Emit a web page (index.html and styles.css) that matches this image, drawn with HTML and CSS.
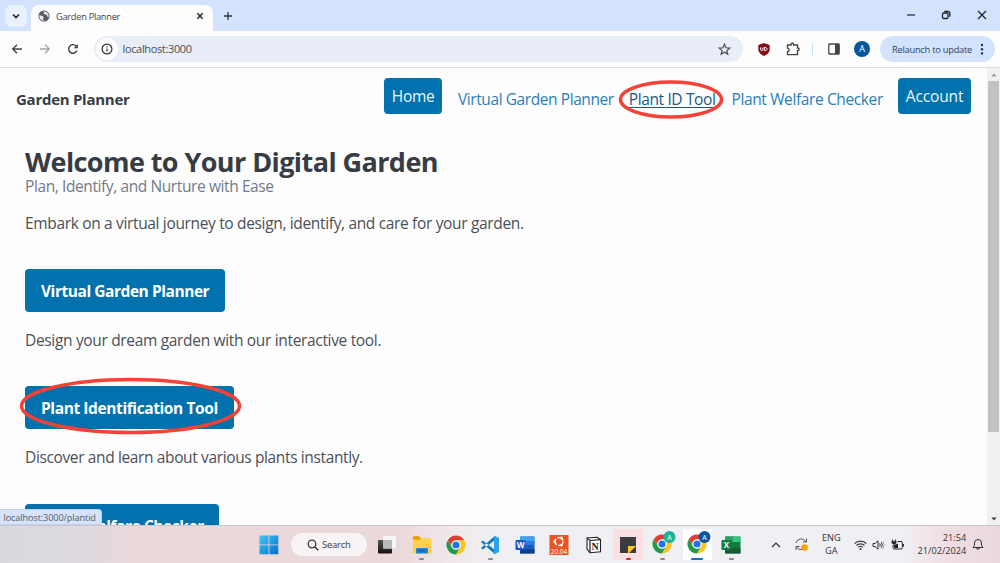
FILE: index.html
```html
<!DOCTYPE html>
<html lang="en">
<head>
<meta charset="utf-8">
<title>Garden Planner</title>
<link rel="stylesheet" href="styles.css">
</head>
<body>
<div class="screen">
  <header class="tabstrip">
    <button class="tab-search"><svg width="22" height="22" viewBox="0 0 22 22"><path d="M8 9.5l3 3 3-3" fill="none" stroke="#222" stroke-width="1.6"/></svg></button>
    <div class="tab">
      <svg width="12" height="12" viewBox="0 0 12 12"><circle cx="6" cy="6" r="5.6" fill="#5a5e63"/><path d="M1.3 5.2L4 5.7 5.8 7.2 5 8.2 5.5 10.6C3 10.3 1 8.200 1.300 5.200zM6 1.500L5.500 3.200 7 4.500 8.500 4.300 9.500 6.800 10.600 7C11 4 9.500 1.800 6 1.500z" fill="#e8edf5"/></svg>
      <span class="tab-title">Garden Planner</span>
      <svg class="tab-close" width="8" height="8" viewBox="0 0 8 8"><path d="M1.300 1.300l5.400 5.400M6.700 1.300l-5.400 5.400" stroke="#222" stroke-width="1.400"/></svg>
    </div>
    <svg class="tab-new" width="10" height="10" viewBox="0 0 10 10"><path d="M5 1v8M1 5h8" stroke="#333" stroke-width="1.300"/></svg>
    <div class="window-controls">
      <svg width="10" height="10" viewBox="0 0 10 10"><path d="M1 5h8" stroke="#222" stroke-width="1.200"/></svg>
      <svg width="10" height="10" viewBox="0 0 10 10"><rect x="1.500" y="3" width="5.500" height="5.500" rx="1.300" fill="none" stroke="#222" stroke-width="1.300"/><path d="M3.300 1.500h3.500a2 2 0 0 1 2 2v3.300" fill="none" stroke="#222" stroke-width="1.300"/></svg>
      <svg width="10" height="10" viewBox="0 0 10 10"><path d="M1 1l8 8M9 1l-8 8" stroke="#222" stroke-width="1.200"/></svg>
    </div>
  </header>

  <div class="toolbar">
    <div class="nav-buttons">
      <svg width="12" height="12" viewBox="0 0 12 12"><path d="M11 6H2M6 1.700L1.700 6 6 10.300" fill="none" stroke="#444" stroke-width="1.400"/></svg>
      <svg width="12" height="12" viewBox="0 0 12 12"><path d="M1 6h9M6 1.700L10.300 6 6 10.300" fill="none" stroke="#a3a5a8" stroke-width="1.300"/></svg>
      <svg width="12" height="12" viewBox="0 0 12 12"><path d="M10 7.500A4.300 4.300 0 1 1 9.600 3.600" fill="none" stroke="#444" stroke-width="1.400"/><path d="M10.900 1v4.200H6.700z" fill="#444"/></svg>
    </div>
    <div class="omnibox">
      <span class="site-info"><svg width="12" height="12" viewBox="0 0 12 12"><circle cx="6" cy="6" r="4.900" fill="none" stroke="#333" stroke-width="1.200"/><path d="M6 5.400v3.100M6 3.300v1.200" stroke="#333" stroke-width="1.200"/></svg></span>
      <span class="url">localhost:3000</span>
      <svg class="star" width="13" height="13" viewBox="0 0 13 13"><path d="M6.500 1.300l1.500 3.500 3.800.300-2.900 2.500.900 3.700-3.300-2-3.300 2 .9-3.700L1.200 5.100 5 4.800z" fill="none" stroke="#484b50" stroke-width="1.200"/></svg>
    </div>
    <div class="extensions">
      <svg width="12" height="13" viewBox="0 0 12 13"><path d="M6 0l5.700 2v4.500C11.700 9.500 9 11.700 6 13 3 11.700.3 9.500.3 6.500V2z" fill="#850f16"/><path d="M2.600 4.500v2c0 1.500 2.200 1.500 2.200 0v-2M6.300 4.500v3h.8c2.500 0 2.500-3 0-3z" fill="none" stroke="#fff" stroke-width="1"/></svg>
      <svg class="puzzle" width="14" height="14" viewBox="0 0 14 14"><path d="M1.500 3H5V2.500a1.300 1.300 0 0 1 2.600 0V3H11.500v3h.3a1.300 1.300 0 0 1 0 2.600h-.3v4H1.500V9.500c2.200-.2 2.200-3.200 0-3.400z" fill="none" stroke="#444" stroke-width="1.400"/></svg>
      <span class="divider"></span>
      <svg class="panel" width="12" height="12" viewBox="0 0 12 12"><rect x=".8" y="1" width="10.400" height="10" rx=".8" fill="none" stroke="#444" stroke-width="1.300"/><path d="M7 1h4v10H7z" fill="#444"/></svg>
      <span class="avatar">A</span>
      <button class="relaunch"><span>Relaunch to update</span><svg width="4" height="14" viewBox="0 0 4 14"><g fill="#17324d"><circle cx="2" cy="3" r="1.200"/><circle cx="2" cy="7.200" r="1.200"/><circle cx="2" cy="11.400" r="1.200"/></g></svg></button>
    </div>
  </div>

  <div class="viewport">
    <div class="page">
      <nav class="site-nav">
        <strong class="brand">Garden Planner</strong>
        <a class="nav-btn home">Home</a>
        <a class="nav-link planner">Virtual Garden Planner</a>
        <a class="nav-link idtool">Plant ID Tool<svg class="ring ring-nav" width="106" height="41" viewBox="0 0 106 41"><ellipse cx="53" cy="20.500" rx="50.500" ry="17.500"/></svg></a>
        <a class="nav-link welfare">Plant Welfare Checker</a>
        <a class="nav-btn account">Account</a>
      </nav>
      <main class="content">
        <h1>Welcome to Your Digital Garden</h1>
        <p class="subtitle">Plan, Identify, and Nurture with Ease</p>
        <p class="intro">Embark on a virtual journey to design, identify, and care for your garden.</p>
        <section class="feature"><a class="cta cta-planner">Virtual Garden Planner</a><p class="desc-planner">Design your dream garden with our interactive tool.</p></section>
        <section class="feature"><a class="cta cta-id">Plant Identification Tool<svg class="ring ring-cta" width="224" height="60" viewBox="0 0 224 60"><ellipse cx="112.500" cy="30" rx="109" ry="26.500"/></svg></a><p class="desc-id">Discover and learn about various plants instantly.</p></section>
        <section class="feature"><a class="cta cta-welfare">Plant Welfare Checker</a></section>
      </main>
      <div class="status">localhost:3000/plantid</div>
    </div>
    <div class="scrollbar">
      <svg width="12" height="12" viewBox="0 0 12 12"><path d="M3.300 8.500L6 5.500l2.700 3z" fill="#999"/></svg>
      <span class="thumb"></span>
      <svg width="12" height="12" viewBox="0 0 12 12"><path d="M3.300 4.500L6 7.500l2.700-3z" fill="#444"/></svg>
    </div>
  </div>

  <footer class="taskbar">
    <svg class="start" width="20" height="20" viewBox="0 0 20 20"><defs><linearGradient id="win" x2="1" y2="1"><stop stop-color="#43c5f5"/><stop offset="1" stop-color="#0072cf"/></linearGradient></defs><path d="M.5.500h9v9h-9zM10.300.500h9v9h-9zM.500 10.300h9v9h-9zM10.300 10.300h9v9h-9z" fill="url(#win)"/></svg>
    <div class="search"><svg width="12" height="12" viewBox="0 0 12 12"><circle cx="5" cy="5" r="3.800" fill="none" stroke="#333" stroke-width="1.300"/><path d="M7.700 7.700l3.600 3.600" stroke="#333" stroke-width="1.400"/></svg><span>Search</span></div>
    <div class="apps">
      <div class="app"><svg width="20" height="20" viewBox="0 0 20 20"><defs><linearGradient id="tv" y2="1" x2="0"><stop stop-color="#555"/><stop offset="1" stop-color="#111"/></linearGradient></defs><rect x="1" y="5" width="14" height="13.500" rx="1" fill="url(#tv)"/><rect x="6" y="1" width="13" height="12.500" rx="1" fill="#f5f5f5"/><path d="M6 5h9v8.500H6z" fill="#b9b9b9"/></svg></div>
      <div class="app"><svg width="20" height="20" viewBox="0 0 20 20"><path d="M.8 2.500c0-.8.400-1.200 1-1.200h5l2 2H18c.8 0 1.300.5 1.300 1.200V17c0 1-.5 1.500-1.300 1.500H2c-.8 0-1.200-.5-1.200-1.500z" fill="#ffd04b"/><path d="M.8 4.500V2.500c0-.8.400-1.200 1-1.200h5l2 2-1.600 1.700z" fill="#e5a000"/><path d="M4 18.500v-4c0-.8.500-1.500 1.300-1.500h9.400c.8 0 1.300.7 1.300 1.500v4z" fill="#1688d3"/><path d="M6 15.800h8" stroke="#075d9d"/></svg><i class="run"></i></div>
      <div class="app"><svg width="20" height="20" viewBox="0 0 20 20"><use href="#chrome"/></svg></div>
      <div class="app"><svg width="20" height="20" viewBox="0 0 20 20"><path d="M1 7l1.800-1.400L15 15v4.300zM1 13l1.800 1.400L15 5V.7z" fill="#137ac2"/><path d="M14 .6l5 2.300v14.200l-5 2.300z" fill="#2aa3ea"/></svg><i class="run"></i></div>
      <div class="app"><svg width="20" height="20" viewBox="0 0 20 20"><rect x="5" y="1.500" width="14.500" height="17" rx="1" fill="#185abd"/><path d="M5 1.500h14.500V6H5z" fill="#41a5ee"/><path d="M5 6h14.500v4H5z" fill="#2b7cd3"/><path d="M5 14h14.500v4.500H5z" fill="#103f91"/><rect x=".5" y="5" width="10" height="10" rx="1" fill="#185abd"/><text x="5.500" y="12.800" class="badge-letter">W</text></svg></div>
      <div class="app"><svg width="20" height="20" viewBox="0 0 20 20"><path d="M.5 0h19v20H.5z" fill="#e95420"/><circle cx="10" cy="6.500" r="4" fill="none" stroke="#fff" stroke-width="1.500" stroke-dasharray="6.800 1.580"/><g fill="#fff"><circle cx="5.500" cy="6.500" r="1.200"/><circle cx="12.500" cy="2.700" r="1.200"/><circle cx="12.500" cy="10.300" r="1.200"/></g><text x="10" y="19" class="badge-small">20.04</text></svg></div>
      <div class="app"><svg width="20" height="20" viewBox="0 0 20 20"><path d="M3 3l10-.8 3.500 2.300v12.300L6 17.700 3 14z" fill="#fff" stroke="#222" stroke-width="1.100"/><path d="M3 3l3 2.500 10.500-.8M6 5.500v12.200" fill="none" stroke="#222" stroke-width="1.200"/><text x="11.200" y="14.500" class="notion">N</text></svg></div>
      <div class="app note"><svg width="20" height="20" viewBox="0 0 20 20"><path d="M2 2h16v16H2z" fill="#3c3c3e"/><path d="M10 11h8l-8 8z" fill="#ffcc18"/></svg><i class="run red"></i></div>
      <div class="app"><svg class="with-profile" width="24" height="24" viewBox="0 0 24 24"><use href="#chrome" y="3"/><circle cx="17.500" cy="6" r="6" fill="#15b59c"/><text x="17.500" y="8.600" class="profile">A</text></svg><i class="run"></i></div>
      <div class="app active"><svg class="with-profile" width="24" height="24" viewBox="0 0 24 24"><use href="#chrome" y="3"/><circle cx="17.500" cy="6" r="6" fill="#0b57a0"/><text x="17.500" y="8.600" class="profile">A</text></svg><i class="run blue"></i></div>
      <div class="app"><svg width="20" height="20" viewBox="0 0 20 20"><rect x="4" y="1.500" width="15.500" height="17" rx="1" fill="#107c41"/><path d="M4 1.500h8V7H4z" fill="#21a366"/><path d="M12 1.500h7.500V7H12z" fill="#33c481"/><path d="M4 13h15.500v5.500H4z" fill="#185c37"/><rect x=".5" y="5" width="10" height="10" rx="1" fill="#107c41"/><text x="5.500" y="12.800" class="badge-letter">X</text></svg><i class="run"></i></div>
    </div>
    <div class="tray">
      <svg width="10" height="8" viewBox="0 0 10 8"><path d="M1 6l4-4 4 4" fill="none" stroke="#333" stroke-width="1.200"/></svg>
      <svg class="sync" width="15" height="15" viewBox="0 0 15 15"><path d="M2 6a5.300 5.300 0 0 1 10-1M12.500 1.500V5H9M8 12.500A5.300 5.300 0 0 1 2.500 10M2 13V9.500h3.500" fill="none" stroke="#555" stroke-width="1"/><circle cx="10.500" cy="10.500" r="3.300" fill="#f5a300"/></svg>
      <div class="lang">ENG<br>GA</div>
      <svg class="wifi" width="13" height="12" viewBox="0 0 13 12"><g fill="none" stroke="#333" stroke-width="1.100"><path d="M.7 4.500a8.200 8.200 0 0 1 11.600 0M2.500 6.500a5.700 5.700 0 0 1 8 0M4.300 8.300a3.200 3.200 0 0 1 4.400 0"/></g><circle cx="6.500" cy="10" r="1" fill="#333"/></svg>
      <svg class="volume" width="13" height="12" viewBox="0 0 13 12"><path d="M1 4.500h2l3-2.700v8.400l-3-2.700H1zM7.700 4.500q1.100 1.500 0 3M9.300 3.200q2 2.800 0 5.600" fill="none" stroke="#333"/><path d="M10.800 2q2.800 4 0 8" fill="none" stroke="#aaa"/></svg>
      <svg class="battery" width="13" height="12" viewBox="0 0 13 12"><path d="M6.500 2.500H10A1.300 1.300 0 0 1 11.300 3.800v4.900A1.300 1.300 0 0 1 10 10H3.300A1.300 1.300 0 0 1 2 8.700V6" fill="none" stroke="#222"/><path d="M3 6l4-1.500V9H3z" fill="#222"/><path d="M12.500 5v2.500M1.700.5v2M4.300.5v2" stroke="#222"/><path d="M.5 2.200h5v1.800L3 6 .5 4z" fill="#222"/></svg>
      <div class="clock">21:54<br>21/02/2024</div>
      <svg class="bell" width="12" height="13" viewBox="0 0 12 13"><path d="M1 9.500h10L9.500 7.500V5a3.500 3.500 0 0 0-7 0v2.500zM4.500 10c.3 1.800 2.700 1.800 3 0" fill="none" stroke="#333"/></svg>
    </div>
  </footer>
</div>
<svg width="0" height="0" class="symbols"><defs><g id="chrome"><circle cx="10" cy="10" r="9.500" fill="#fff"/><path d="M1.770 5.250A9.500 9.500 0 0 1 18.230 5.250H10a4.750 4.750 0 0 0-4.110 7.120z" fill="#e33b2e"/><path d="M18.230 5.250A9.500 9.500 0 0 1 10 19.500l4.110-7.130A4.750 4.750 0 0 0 10 5.250z" fill="#fcc31e"/><path d="M10 19.500A9.500 9.500 0 0 1 1.770 5.250l4.120 7.120a4.750 4.750 0 0 0 8.220 0z" fill="#229a4b"/><circle cx="10" cy="10" r="4.600" fill="#fff"/><circle cx="10" cy="10" r="3.600" fill="#2474e5"/></g></defs></svg>
</body>
</html>
```
FILE: styles.css
```css
* { box-sizing: border-box; }
body { margin: 0; font-family: "Open Sans", "Noto Sans", sans-serif; }
svg { display: block; flex: none; }
button { border: 0; padding: 0; font-family: inherit; }
h1, p { margin: 0; }
span, a, strong, h1, p { white-space: nowrap; }
.screen { width: 1000px; height: 563px; overflow: hidden; display: flex; flex-direction: column; background: #fdfdfe; }
.symbols { position: absolute; }

.tabstrip { height: 31px; flex: none; display: flex; align-items: flex-start; background: #d3e2fd; padding-left: 5px; }
.tab-search { width: 22px; height: 22px; margin-top: 5px; border-radius: 7px; background: #e9f1fe; }
.tab { width: 182px; height: 27px; margin: 5px 0 0 4px; padding: 0 9px 5px 7px; display: flex; align-items: center; background: #fdfdfe; border-radius: 8px 8px 0 0; }
.tab-title { font-size: 9.300px; letter-spacing: -0.300px; color: #454545; margin-left: 6px; }
.tab-close { margin-left: auto; }
.tab-new { margin: 11px 0 0 10px; }
.window-controls { display: flex; gap: 25.500px; margin: 10px 13.500px 0 auto; }

.toolbar { height: 37px; flex: none; display: flex; align-items: center; background: #fdfdfe; border-bottom: 1px solid #dedfe2; border-radius: 8px 8px 0 0; padding: 0 5px 0 11px; }
.nav-buttons { display: flex; gap: 16px; }
.omnibox { width: 649px; height: 26px; margin-left: 15px; padding: 0 12px 0 2px; display: flex; align-items: center; border-radius: 13px; background: #e9edf8; }
.site-info { width: 22px; height: 22px; display: grid; place-items: center; border-radius: 50%; background: #fdfdfe; }
.url { font-size: 11px; line-height: 14px; letter-spacing: -0.350px; color: #4b4d52; margin: -1px 0 0 4.500px; }
.star { margin-left: auto; }
.extensions { display: flex; align-items: center; flex: 1; padding-left: 15px; }
.puzzle { margin-left: 16px; }
.divider { width: 1px; height: 12px; margin-left: 12px; background: #c7dcfa; }
.panel { margin-left: 15px; }
.avatar { width: 16px; height: 16px; margin-left: 14px; border-radius: 50%; background: #06569d; color: #fff; font-size: 9px; line-height: 16px; text-align: center; }
.relaunch { width: 115px; height: 26px; margin-left: auto; padding: 0 11px 0 12px; display: flex; align-items: center; justify-content: space-between; border-radius: 13px; background: #d3e2fd; color: #294665; font-size: 9.300px; letter-spacing: -0.250px; }

.viewport { height: 457px; flex: none; display: flex; }
.page { flex: 1; position: relative; overflow: hidden; }
.scrollbar { width: 13px; display: flex; flex-direction: column; align-items: center; background: #f1f1f4; }
.thumb { width: 11px; height: 351px; margin: 1px 0 auto; background: #c2c2c4; }
.site-nav { height: 64px; display: flex; align-items: center; padding: 0 16px 1px; color: #373c44; }
.brand { font-size: 15px; letter-spacing: -0.270px; width: 368px; margin-top: -2px; }
.nav-btn { height: 36px; margin-top: -7px; padding-top: 1px; border-radius: 4px; background: #0172ad; color: #edf6fb; font-size: 15.500px; line-height: 35px; text-align: center; }
.home { width: 58px; margin-left: 1px; letter-spacing: -0.300px; }
.account { width: 73px; margin-left: 15px; letter-spacing: -0.150px; }
.nav-link { color: #2b7fb5; font-size: 15.500px; line-height: 19px; }
.planner { width: 156px; margin-left: 16px; letter-spacing: -0.420px; }
.idtool { position: relative; width: 87px; margin-left: 15px; color: #185a86; letter-spacing: -0.370px; text-decoration: underline; text-underline-offset: 2px; }
.welfare { width: 152px; margin-left: 16px; letter-spacing: -0.380px; }
.ring { position: absolute; fill: none; stroke: #f44236; stroke-width: 3.400px; }
.ring-nav { left: -11px; top: -11px; }
.ring-cta { left: -7px; top: -10px; }

.content { padding: 11px 0 0 25px; color: #4b5056; font-size: 15.500px; }
h1 { font-size: 27px; line-height: 38px; letter-spacing: -0.580px; color: #373c44; }
.subtitle { line-height: 20px; letter-spacing: -0.400px; margin-top: -5px; color: #727b89; }
.intro { line-height: 22px; letter-spacing: -0.340px; margin: 16px 0 35px; }
.feature { height: 117.300px; }
.cta { position: relative; display: block; height: 43px; padding-left: 16px; border-radius: 4px; background: #0172ad; color: #fff; font-weight: 700; letter-spacing: -0.450px; line-height: 44px; }
.cta-planner { width: 200px; }
.cta-id { width: 209px; letter-spacing: -0.400px; }
.cta-welfare { width: 194px; }
.feature p { line-height: 22px; margin-top: 17px; }
.desc-planner { letter-spacing: -0.330px; }
.desc-id { letter-spacing: -0.370px; }
.status { position: absolute; left: 0; bottom: 0; width: 101.500px; height: 16px; padding-left: 3.500px; border: 1px solid #c5d1e5; border-left: 0; border-radius: 0 4px 0 0; background: #d6e4fb; color: #555a63; font-size: 9.200px; letter-spacing: -0.130px; line-height: 15px; }

.taskbar { height: 38px; flex: none; display: flex; align-items: center; border-top: 1px solid #c9c5c8; background: linear-gradient(90deg, #dbd9df 0, #dcd9df 70px, #ead8da 140px, #ead8da 400px, #f0e8eb 450px, #f0eff3 500px, #f0eff3 900px, #efdde2 950px, #e9d9df 1000px); padding-left: 259px; }
.search { width: 76px; height: 23px; margin: 0 3px 0 12px; padding-left: 16px; display: flex; align-items: center; gap: 3px; border-radius: 12px; background: #f8f3f5; color: #3c3c3c; font-size: 9.500px; letter-spacing: -0.250px; }
.apps { display: flex; height: 37px; align-items: center; }
.app { position: relative; width: 34.400px; height: 31px; display: grid; place-items: center; }
.with-profile { margin: -4px 0 0 4px; }
.note { background: linear-gradient(90deg, transparent 2px, #fbe0e3 2px, #fbe0e3 32px, transparent 32px); }
.active { background: linear-gradient(90deg, transparent 3px, #fff 3px, #fff 32px, transparent 32px); }
.run { position: absolute; left: 15px; bottom: 0; width: 5px; height: 2px; border-radius: 1px; background: #8c898c; }
.red { background: #c9302c; }
.blue { left: 11px; width: 12px; background: #0a70c8; }
.badge-letter { font: 700 8px "Open Sans", sans-serif; fill: #fff; text-anchor: middle; }
.badge-small { font: 6.500px "Open Sans", sans-serif; fill: #fff; text-anchor: middle; }
.notion { font: 700 10px "Liberation Serif", serif; fill: #222; text-anchor: middle; }
.profile { font: 7px "Open Sans", sans-serif; fill: #fff; text-anchor: middle; }
.tray { display: flex; align-items: center; margin-left: 23px; color: #333; font-size: 9.200px; line-height: 12.500px; }
.sync { margin-left: 13px; }
.lang { width: 22px; margin-left: 11px; text-align: center; }
.wifi { margin-left: 12px; }
.volume { margin-left: 5px; }
.battery { margin-left: 6px; }
.clock { width: 54px; margin-left: 8px; text-align: right; }
.bell { margin-left: 6px; }
```
